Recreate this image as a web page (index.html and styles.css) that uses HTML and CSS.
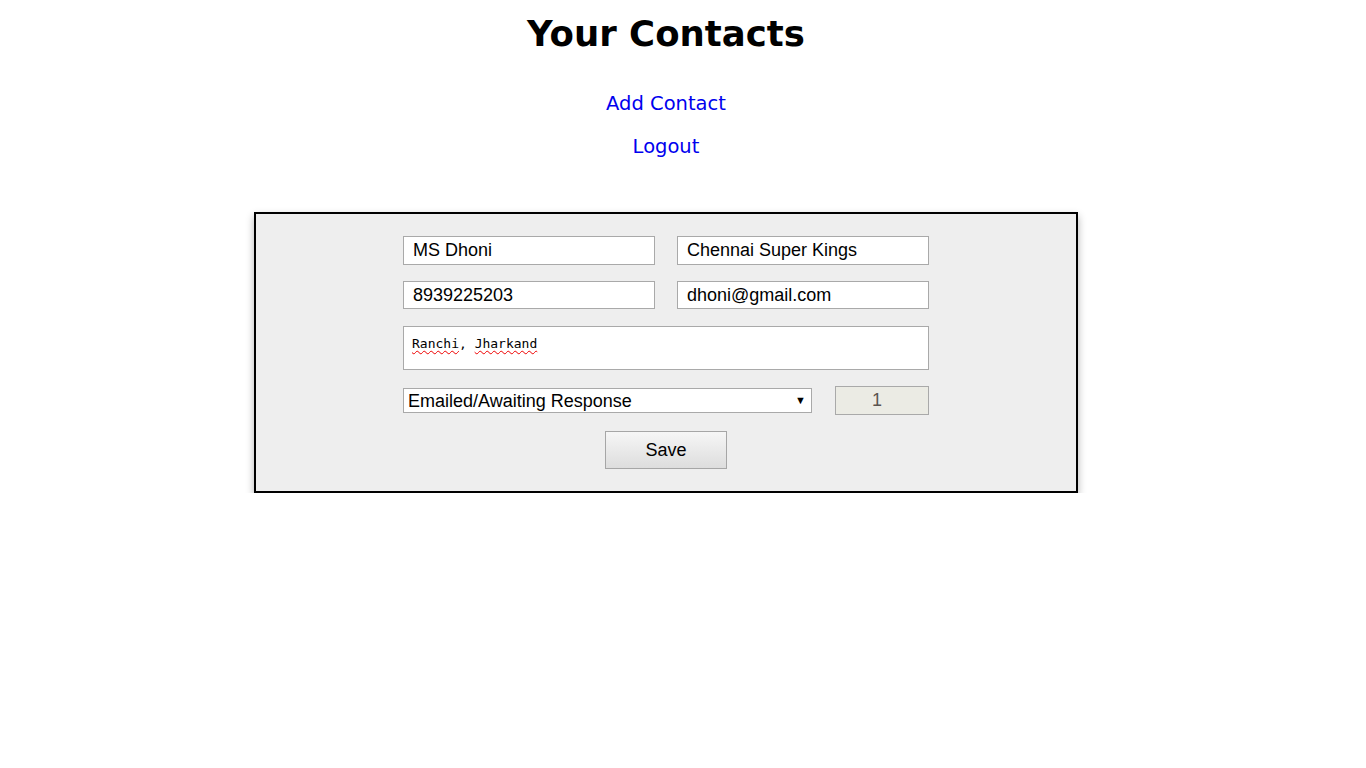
FILE: index.html
```html
<!DOCTYPE html>
<html>
<head>
<meta charset="utf-8">
<title>Your Contacts</title>
<link rel="stylesheet" href="styles.css">
</head>
<body>
<div class="page">
  <h1 class="title">Your Contacts</h1>
  <nav class="nav">
    <a class="nav-link" href="#">Add Contact</a>
    <a class="nav-link" href="#">Logout</a>
  </nav>
  <form class="card">
    <div class="row">
      <input class="field" type="text" value="MS Dhoni">
      <input class="field" type="text" value="Chennai Super Kings">
    </div>
    <div class="row row-2">
      <input class="field" type="text" value="8939225203">
      <input class="field" type="text" value="dhoni@gmail.com">
    </div>
    <div class="area" role="textbox" aria-multiline="true"><span class="misspelled">Ranchi</span>, <span class="misspelled">Jharkand</span></div>
    <div class="row row-4">
      <div class="select-wrap">
        <select class="select">
          <option>Emailed/Awaiting Response</option>
        </select>
        <span class="select-arrow">▼</span>
      </div>
      <input class="number" type="text" value="1" disabled>
    </div>
    <div class="actions">
      <button class="save" type="button">Save</button>
    </div>
  </form>
</div>
</body>
</html>
```
FILE: styles.css
```css
html, body {
  margin: 0;
  padding: 0;
  background: #fff;
}
.page {
  width: 1332px;
  display: flex;
  flex-direction: column;
  align-items: center;
  font-family: "DejaVu Sans", Verdana, sans-serif;
}
.title {
  margin: 13px 0 0 0;
  font-size: 35.5px;
  font-weight: bold;
  line-height: 42px;
  color: #000;
}
.nav {
  display: flex;
  flex-direction: column;
  align-items: center;
  gap: 19px;
  margin-top: 37px;
}
.nav-link {
  color: #0000ee;
  text-decoration: none;
  font-size: 19.5px;
  line-height: 24px;
}
.card {
  margin-top: 53px;
  width: 820px;
  box-sizing: content-box;
  border: 2px solid #000;
  background: #eeeeee;
  box-shadow: 0 4px 8px rgba(0, 0, 0, 0.3);
  padding: 22px 0 22px 0;
  display: flex;
  flex-direction: column;
  align-items: center;
  font-family: "Liberation Sans", Arial, sans-serif;
}
.row {
  width: 526px;
  display: flex;
  justify-content: space-between;
  align-items: center;
}
.row-2 {
  margin-top: 16px;
}
.field {
  width: 252px;
  height: 29px;
  box-sizing: border-box;
  border: 1px solid #a9a9a9;
  background: #fff;
  padding: 0 9px;
  margin: 0;
  font-family: "Liberation Sans", Arial, sans-serif;
  font-size: 18px;
  color: #000;
  outline: none;
}
.row-2 .field {
  height: 28px;
}
.area {
  margin-top: 17px;
  width: 526px;
  height: 44px;
  box-sizing: border-box;
  border: 1px solid #a9a9a9;
  background: #fff;
  padding: 8px 8px;
  font-family: "DejaVu Sans Mono", Consolas, monospace;
  font-size: 13px;
  line-height: 17px;
  color: #000;
}
.misspelled {
  text-decoration: underline wavy #e00;
  text-decoration-thickness: 1px;
  text-underline-offset: 2px;
}
.row-4 {
  margin-top: 16px;
  height: 29px;
}
.select-wrap {
  position: relative;
  width: 409px;
  height: 25px;
}
.select {
  width: 100%;
  height: 100%;
  box-sizing: border-box;
  -webkit-appearance: none;
  appearance: none;
  border: 1px solid #a9a9a9;
  border-radius: 0;
  background: #fff;
  margin: 0;
  padding: 0 0 0 4px;
  font-family: "Liberation Sans", Arial, sans-serif;
  font-size: 18px;
  color: #000;
  outline: none;
}
.select-arrow {
  position: absolute;
  right: 6px;
  top: 6px;
  font-size: 11px;
  line-height: 12px;
  color: #000;
  pointer-events: none;
}
.number {
  width: 94px;
  height: 29px;
  box-sizing: border-box;
  border: 1px solid #a9a9a9;
  background: #ebebe4;
  margin: 0;
  padding: 0 10px 0 0;
  text-align: center;
  font-family: "Liberation Sans", Arial, sans-serif;
  font-size: 18px;
  color: #5a5450;
  -webkit-text-fill-color: #5a5450;
  opacity: 1;
}
.actions {
  margin-top: 16px;
  display: flex;
  justify-content: center;
}
.save {
  width: 122px;
  height: 38px;
  box-sizing: border-box;
  border: 1px solid #a6a6a6;
  border-radius: 0;
  background: linear-gradient(#f6f6f6, #dddddd);
  font-family: "Liberation Sans", Arial, sans-serif;
  font-size: 18px;
  color: #000;
  padding: 0;
  margin: 0;
}
```
